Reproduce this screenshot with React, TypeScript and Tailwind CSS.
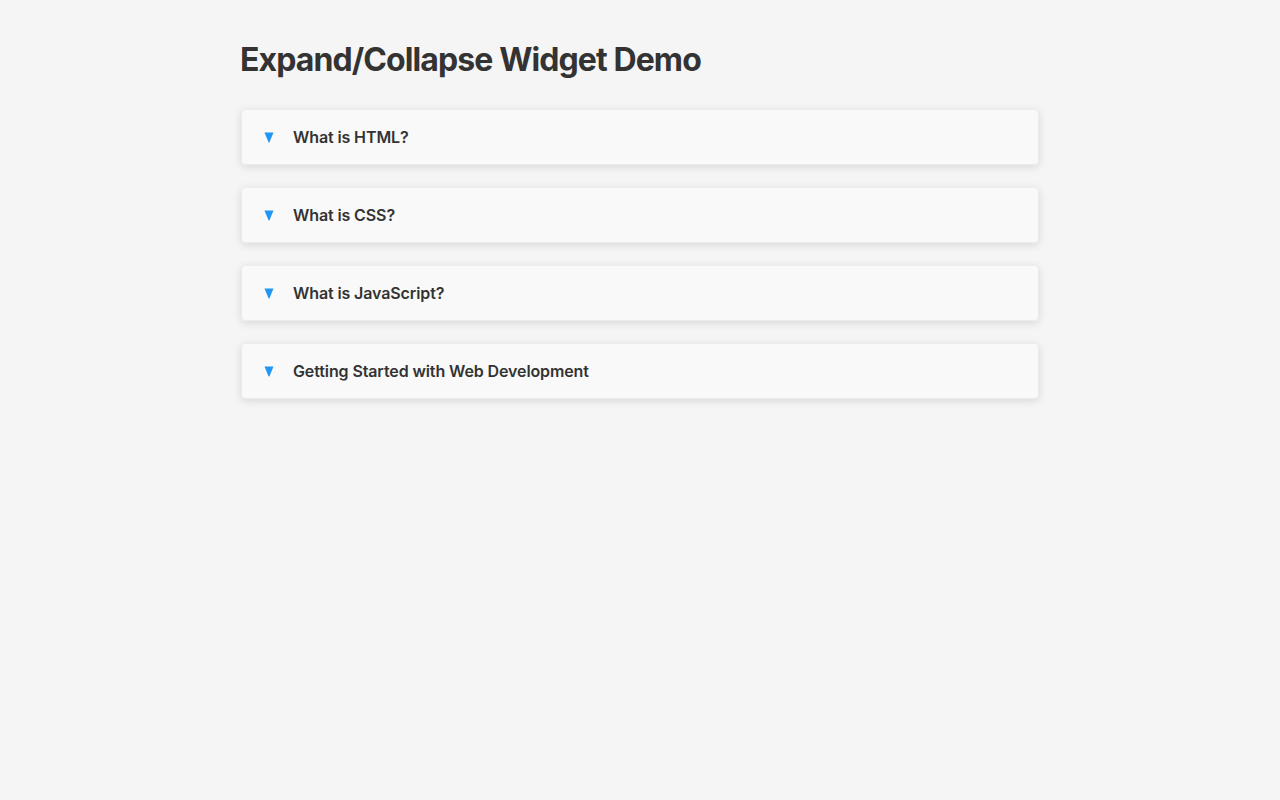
import React, { useState } from "react";

const items = [
  { title: "What is HTML?", body: "HTML is the standard markup language for creating web pages." },
  { title: "What is CSS?", body: "CSS describes how HTML elements are displayed on screen." },
  { title: "What is JavaScript?", body: "JavaScript is the programming language of the web." },
  { title: "Getting Started with Web Development", body: "Start by learning HTML, CSS and JavaScript basics." },
];

export default function App() {
  const [open, setOpen] = useState<number | null>(null);

  return (
    <div className="min-h-screen bg-[#f5f5f5] text-[#333] [font-family:Inter,'Noto_Sans',sans-serif]">
      <div className="max-w-[800px] mx-auto pt-[40px]">
        {/* Titre */}
        <h1 className="text-[32px] font-bold leading-[39px] tracking-[-0.9px]">
          Expand/Collapse Widget Demo
        </h1>

        <div className="mt-[30px] flex flex-col gap-[22px]">
          {items.map((item, i) => (
            <div
              key={item.title}
              className="mx-px bg-[#f9f9f9] border border-[#ececec] rounded-[4px] shadow-[0_2px_8px_rgba(0,0,0,0.12)]"
            >
              <button
                onClick={() => setOpen(open === i ? null : i)}
                className="w-full h-[54px] flex items-center pl-[22px] text-left"
              >
                <svg width="10" height="11" viewBox="0 0 10 11" className="mr-[19px] mt-[1px]">
                  <path d="M0.5 0.5 L9.5 0.5 L5.6 10 Q5 11 4.4 10 Z" fill="#2196f3" />
                </svg>
                <span className="text-[16px] font-semibold tracking-[-0.11px]">{item.title}</span>
              </button>
              {open === i && (
                <div className="px-[22px] pb-4 text-[15px] text-[#555]">{item.body}</div>
              )}
            </div>
          ))}
        </div>
      </div>
    </div>
  );
}
